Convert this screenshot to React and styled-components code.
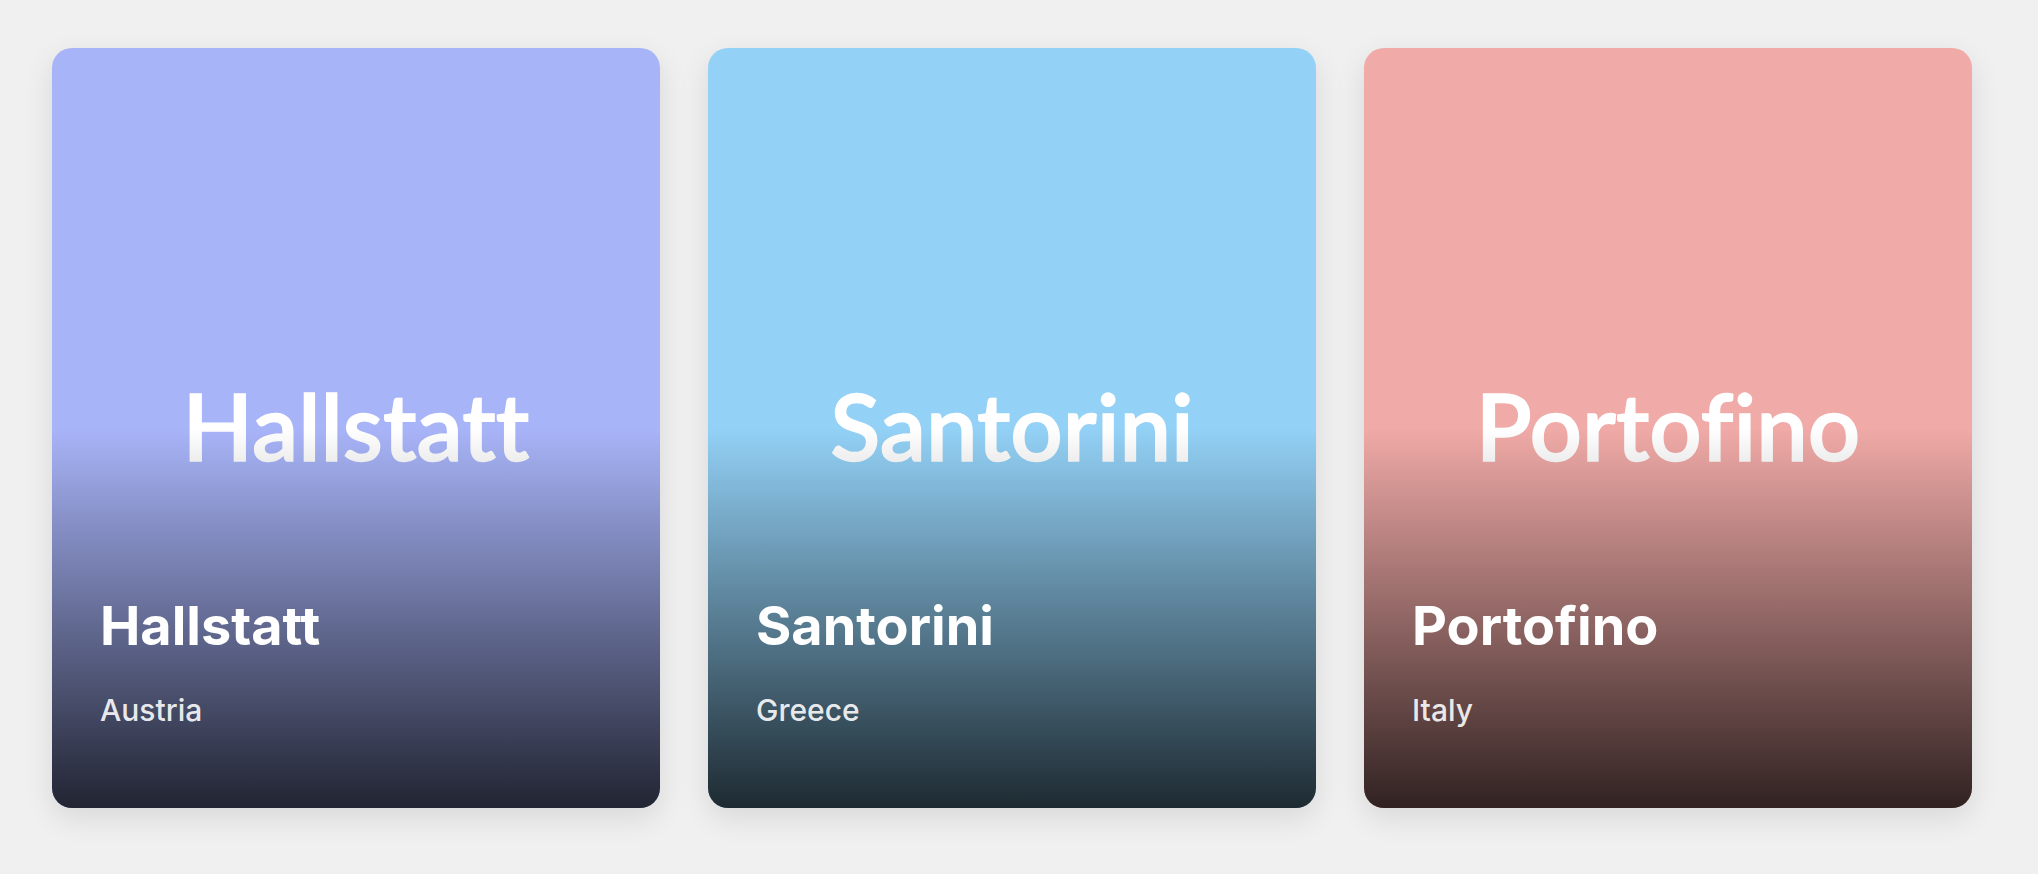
import styled, { createGlobalStyle } from "styled-components";

const places = [
  { name: "Hallstatt", country: "Austria", color: "#a8b4f8" },
  { name: "Santorini", country: "Greece", color: "#93d1f6" },
  { name: "Portofino", country: "Italy", color: "#f0aaa7" },
];

const GlobalStyle = createGlobalStyle`
  * {
    box-sizing: border-box;
  }

  body {
    margin: 0;
    background: #f0f0f0;
    font-family: Inter, "Liberation Sans", sans-serif;
  }
`;

export default function App() {
  return (
    <>
      <GlobalStyle />
      <Page>
        <Grid>
          {places.map((p) => (
            <Card key={p.name} bg={p.color}>
              <Cover>{p.name}</Cover>
              <Shade />
              <Info>
                <Title>{p.name}</Title>
                <Country>{p.country}</Country>
              </Info>
            </Card>
          ))}
        </Grid>
      </Page>
    </>
  );
}

const Page = styled.main`
  padding: 48px 0 0 52px;
  min-height: 874px;
`;

const Grid = styled.div`
  display: grid;
  grid-template-columns: repeat(3, 608px);
  gap: 48px;
`;

const Card = styled.article`
  position: relative;
  aspect-ratio: 4 / 5;
  border-radius: 20px;
  overflow: hidden;
  background: ${(props) => props.bg};
  box-shadow: 0 10px 30px rgba(0, 0, 0, 0.1);
`;

const Cover = styled.div`
  height: 100%;
  padding-bottom: 6px;
  display: flex;
  align-items: center;
  justify-content: center;

  font-family: Lato, "Open Sans", sans-serif;
  font-size: 92px;
  font-weight: 600;
  font-variant-ligatures: none;
  color: #ffffff;
  -webkit-text-stroke: 1.4px #ffffff;
`;

const Shade = styled.div`
  position: absolute;
  inset: 0;
  background: linear-gradient(
    to bottom,
    rgba(0, 0, 0, 0) 50%,
    rgba(0, 0, 0, 0.8) 100%
  );
`;

const Info = styled.div`
  position: absolute;
  left: 0;
  right: 0;
  bottom: 0;
  padding: 0 48px 75px;
  color: #ffffff;
`;

const Title = styled.h2`
  margin: 0 0 29px;
  font-size: 54px;
  font-weight: 700;
  line-height: 66px;
`;

const Country = styled.p`
  margin: 0;
  font-size: 30px;
  font-weight: 500;
  line-height: 45px;
  color: rgba(255, 255, 255, 0.9);
`;
